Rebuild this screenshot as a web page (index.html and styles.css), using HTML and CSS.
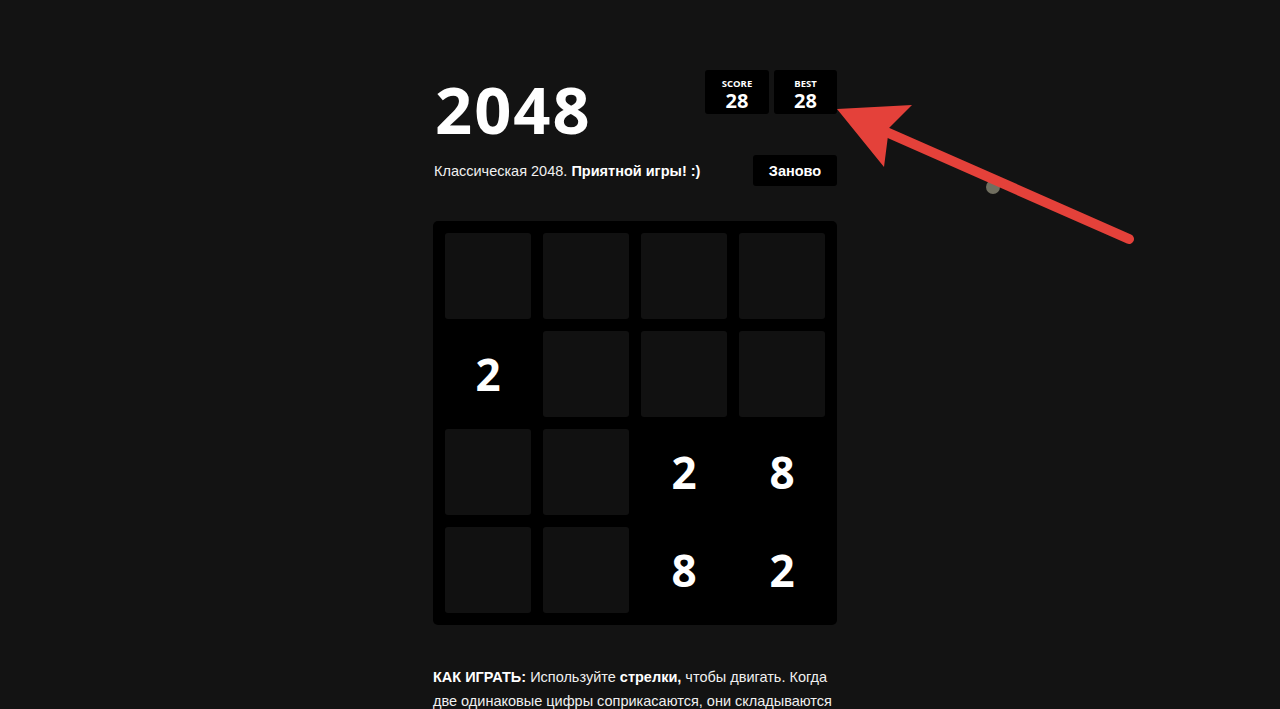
FILE: index.html
```html
<!DOCTYPE html>
<html lang="ru">
<head>
<meta charset="utf-8">
<title>2048</title>
<link rel="stylesheet" href="styles.css">
</head>
<body>
<div class="container">
  <div class="heading">
    <h1 class="title">2048</h1>
    <div class="scores">
      <div class="score-box"><div class="score-label">SCORE</div><div class="score-value">28</div></div>
      <div class="score-box"><div class="score-label">BEST</div><div class="score-value">28</div></div>
    </div>
  </div>
  <div class="intro-row">
    <p class="intro">Классическая 2048. <b>Приятной игры! :)</b></p>
    <button class="restart">Заново</button>
  </div>
  <div class="board">
    <div class="cell"></div><div class="cell"></div><div class="cell"></div><div class="cell"></div>
    <div class="cell tile">2</div><div class="cell"></div><div class="cell"></div><div class="cell"></div>
    <div class="cell"></div><div class="cell"></div><div class="cell tile">2</div><div class="cell tile">8</div>
    <div class="cell"></div><div class="cell"></div><div class="cell tile">8</div><div class="cell tile">2</div>
  </div>
  <p class="explain"><b>КАК ИГРАТЬ:</b> Используйте <b>стрелки,</b> чтобы двигать. Когда две одинаковые цифры соприкасаются, они складываются в одну!</p>
</div>
<svg class="annotation" width="1280" height="709" viewBox="0 0 1280 709">
  <circle cx="993" cy="187" r="7" fill="#716f60"/>
  <line x1="884" y1="131" x2="1129" y2="239" stroke="#e4413a" stroke-width="10" stroke-linecap="round"/>
  <polygon points="837,109 912,105 889,128 884,167" fill="#e4413a"/>
</svg>
</body>
</html>
```

FILE: styles.css
```css
html, body {
  margin: 0;
  background: #131313;
}
body {
  padding: 0 10px 0 0;
  font-family: "Liberation Sans", Arial, sans-serif;
  color: #f2f2f2;
  overflow: hidden;
  height: 709px;
}
.container {
  width: 404px;
  margin: 0 auto;
  padding-top: 70px;
}
.heading {
  display: flex;
  justify-content: space-between;
  align-items: flex-start;
}
.title {
  margin: 7px 0 0 2px;
  font-family: "Open Sans", sans-serif;
  font-weight: 700;
  font-size: 65px;
  line-height: 65px;
  color: #fff;
  letter-spacing: 2px;
}
.scores {
  display: flex;
  gap: 5px;
}
.score-box {
  width: 64px;
  height: 44px;
  box-sizing: border-box;
  padding-top: 5px;
  background: #000;
  border-radius: 3px;
  display: flex;
  flex-direction: column;
  align-items: center;
  justify-content: center;
  font-family: "Open Sans", sans-serif;
  font-weight: 700;
  color: #fff;
}
.score-box + .score-box { width: 63px; }
.score-label {
  font-size: 9.5px;
  line-height: 12px;
}
.score-value {
  font-size: 20px;
  line-height: 22px;
}
.intro-row {
  display: flex;
  justify-content: space-between;
  align-items: center;
  margin-top: 13px;
}
.intro {
  margin: 0 0 0 1px;
  font-size: 14.5px;
  color: #f0f0f0;
}
.intro b { color: #fff; }
.restart {
  width: 84px;
  height: 31px;
  border: 0;
  border-radius: 3px;
  background: #000;
  color: #fff;
  font-family: "Liberation Sans", Arial, sans-serif;
  font-weight: 700;
  font-size: 14.5px;
  padding: 0;
}
.board {
  margin-top: 35px;
  background: #000;
  border-radius: 5px;
  padding: 12px;
  display: grid;
  grid-template-columns: repeat(4, 86px);
  grid-auto-rows: 86px;
  gap: 12px;
}
.cell {
  background: #111111;
  border-radius: 3px;
  display: flex;
  align-items: center;
  justify-content: center;
}
.tile {
  background: #000;
  color: #fff;
  font-family: "Open Sans", sans-serif;
  font-weight: 700;
  font-size: 44px;
}
.explain {
  margin: 40px 0 0 0;
  font-size: 14.5px;
  line-height: 24px;
  color: #f0f0f0;
}
.explain b { color: #fff; }
.annotation {
  position: absolute;
  top: 0;
  left: 0;
  pointer-events: none;
}
```
